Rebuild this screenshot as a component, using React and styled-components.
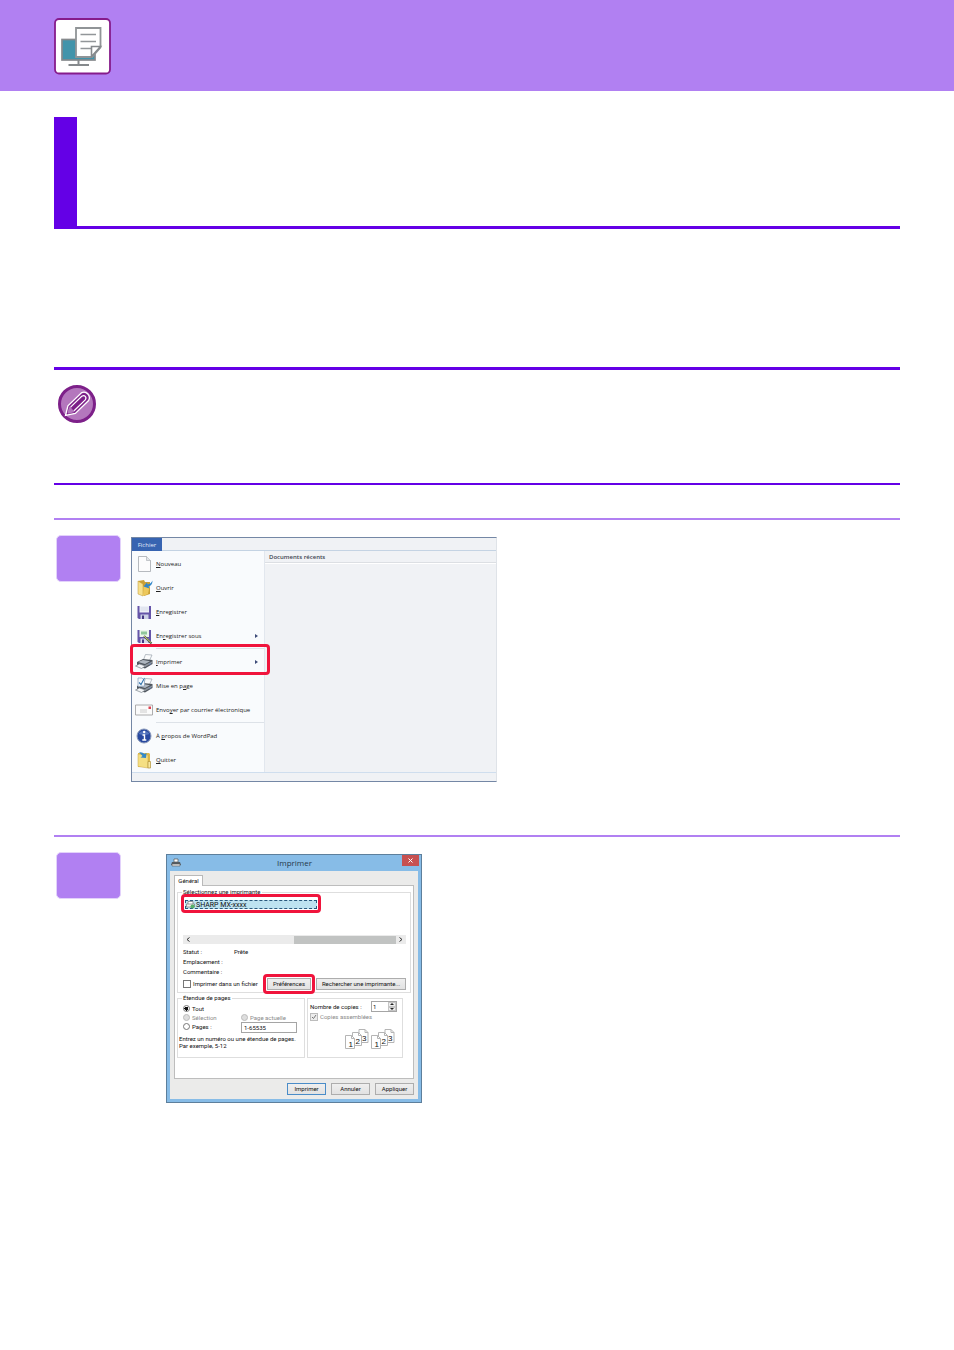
import React, {useState} from 'react';
import styled, {createGlobalStyle, css} from 'styled-components';


const GlobalStyle = createGlobalStyle`
    *, *::before, *::after {
        box-sizing: border-box;
    }
    body {
        margin: 0;
        background: #fff;
        font-family: "Open Sans", "Noto Sans", sans-serif;
        color: #222;
    }
    button, input {
        font: inherit;
        color: inherit;
        margin: 0;
        padding: 0;
        border: 0;
        border-radius: 0;
        background: none;
    }
    svg {
        display: block;
        flex: none;
    }
`

const Banner = styled.header`
    height: 91px;
    padding: 18px 54px;
    background: #b180f2;
`

const Main = styled.main`
    padding: 26px 54px 40px;
`

const TitleBlock = styled.div`
    height: 112px;
    border-left: 23px solid #6400e6;
    border-bottom: 3px solid #6400e6;
`

const Note = styled.section`
    height: 118px;
    margin-top: 138px;
    padding: 15px 4px;
    border-top: 3px solid #6400e6;
    border-bottom: 2px solid #6400e6;
`

const Step = styled.section`
    display: flex;
    align-items: flex-start;
    margin-top: ${props => props.$first ? '33px' : '53px'};
    padding: 15px 2px 0;
    border-top: 2px solid #b180f2;
`

const Badge = styled.div`
    width: 65px;
    height: 47px;
    flex: none;
    border: 1px solid #e3d2fb;
    border-radius: 5px;
    background: #b180f2;
`

const highlight = css`
    position: relative;

    &::after {
        content: '';
        position: absolute;
        border: 3px solid #f0143c;
        border-radius: 4px;
        pointer-events: none;
    }
`

/* File menu window */

const MenuWindow = styled.div`
    width: 366px;
    margin: 2px 0 0 10px;
    border: 1px solid #7487a5;
    border-right-color: #dfe3e8;
    background: #f0f2f5;
    font-size: 6px;
    line-height: 8px;
`

const MenuTabs = styled.div`
    display: flex;
    height: 13px;
    border-bottom: 1px solid #c4d3e3;
`

const MenuTab = styled.button`
    width: 30px;
    height: 13px;
    background: #3764b1;
    color: #e3edfb;
`

const MenuBody = styled.div`
    display: flex;
    height: 222px;
    border-bottom: 1px solid #cfdeee;
`

const MenuList = styled.nav`
    width: 133px;
    padding-top: 1px;
    border-right: 1px solid #e2e7ee;
    background: #f9fbfd;
`

const MenuItem = styled.button`
    display: flex;
    align-items: center;
    gap: 3px;
    width: 100%;
    height: 24px;
    padding: 0 6px 0 3px;
    text-align: left;
    white-space: nowrap;

    ${props => props.$marked && css`
        ${highlight}
        &::after {
            inset: -6px -6px -1px -2px;
        }
    `}
`

const ItemLabel = styled.span`
    flex: 1;
`

const Separator = styled.hr`
    height: 2px;
    margin: 0 0 0 24px;
    border: 0;
    border-top: 1px solid #dde2e8;
`

const Recent = styled.section`
    flex: 1;
`

const RecentTitle = styled.h3`
    height: 12px;
    margin: 0;
    padding: 2px 4px;
    border-bottom: 1px solid #dcdfe3;
    box-shadow: 0 1px #fff;
    font-size: 6px;
    font-weight: 600;
    line-height: 8px;
    color: #3b4350;
`

const MenuFoot = styled.div`
    height: 8px;
`

/* Print dialog */

const Dialog = styled.form`
    width: 256px;
    margin: 2px 0 0 45px;
    padding: 0 3px 3px;
    border: 1px solid #5d7f9c;
    background: #87bce7;
    font-family: Roboto, "Liberation Sans", sans-serif;
    font-size: 6px;
    line-height: 8px;
    color: #111;
    white-space: nowrap;
`

const DialogBar = styled.header`
    display: grid;
    grid-template-columns: 17px 1fr 17px;
    align-items: center;
    height: 16px;
    margin-right: -1px;
`

const DialogTitle = styled.h2`
    margin: 0;
    font-family: "Open Sans", "Noto Sans", sans-serif;
    font-size: 8px;
    font-weight: 400;
    line-height: 12px;
    text-align: center;
    color: #26394a;
`

const Close = styled.button`
    display: flex;
    align-items: center;
    justify-content: center;
    align-self: start;
    height: 11px;
    background: #c75050;
`

const DialogBody = styled.div`
    padding: 4px;
    background: #ebebea;
`

const Tab = styled.button`
    position: relative;
    display: block;
    width: 29px;
    height: 11px;
    margin-bottom: -1px;
    border: 1px solid #b9b9b9;
    border-bottom: 0;
    background: #fff;
`

const Pane = styled.div`
    padding: 2px 2px 20px;
    border: 1px solid #bdbdbd;
    background: #fff;
`

const Group = styled.fieldset`
    min-width: 0;
    margin: 0;
    padding: 0 4px 2px 5px;
    border: 1px solid #dedede;
`

const Legend = styled.legend`
    height: 8px;
    padding: 0 1px;
    margin-left: ${props => props.$indent || '-1px'};
`

const PrinterList = styled.div`
    height: 39px;
    padding: 4px 2px;
`

const Printer = styled.button`
    display: flex;
    align-items: center;
    gap: 1px;
    width: 132px;
    height: 9px;
    border: 1px dashed #28587c;
    background: #bde3f0;
    font-size: 7px;
    ${highlight}

    &::after {
        inset: -7px -5px -5px;
    }
`

const ScrollBar = styled.div`
    display: flex;
    align-items: center;
    height: 9px;
    background: #ebebeb;
`

const ScrollButton = styled.button`
    display: flex;
    align-items: center;
    justify-content: center;
    width: 10px;
    height: 9px;
`

const Thumb = styled.div`
    width: 102px;
    height: 8px;
    margin-left: auto;
    background: #c1c3c2;
`

const Status = styled.dl`
    display: grid;
    grid-template-columns: 51px 1fr;
    margin: 3px 0 1px;
    line-height: 10px;

    dt, dd {
        margin: 0;
    }
`

const Row = styled.div`
    display: flex;
    align-items: center;
    justify-content: space-between;
`

const Buttons = styled.div`
    display: flex;
    justify-content: flex-end;
    gap: 5px;
    margin-top: ${props => props.$top || '0'};
`

const Button = styled.button`
    width: ${props => props.$width || '39px'};
    height: 12px;
    border: 1px solid ${props => props.$primary ? '#4a8cc8' : '#adadad'};
    background: linear-gradient(#efefef, #e2e2e2);

    ${props => props.$marked && css`
        ${highlight}
        &::after {
            inset: -5px;
        }
    `}
`

const Field = styled.label`
    display: flex;
    align-items: center;
    gap: 2px;
    height: 9px;
    color: ${props => props.$muted ? '#8a8a8a' : 'inherit'};
`

const Tick = styled.input`
    appearance: none;
    width: 8px;
    height: 8px;
    flex: none;
    border: 1px solid #777;
    background: #fff;

    &:disabled {
        border-color: #bcbcbc;
        background: #ececec;
    }
    &:checked {
        background: url("data:image/svg+xml,%3Csvg xmlns='http://www.w3.org/2000/svg' viewBox='0 0 6 6'%3E%3Cpath d='M1 3l1.5 1.5L5 1' fill='none' stroke='%23777'/%3E%3C/svg%3E") #ececec;
    }
`

const Radio = styled.input`
    appearance: none;
    width: 7px;
    height: 7px;
    flex: none;
    border: 1px solid #777;
    border-radius: 50%;
    background: #fff;

    &:checked {
        background: radial-gradient(circle, #111 0 2px, #fff 2px);
    }
    &:disabled {
        border-color: #bcbcbc;
        background: #dedede;
    }
`

const Columns = styled.div`
    display: grid;
    grid-template-columns: 128px 96px;
    gap: 2px;
    margin-top: 1px;
`

const Range = styled(Group)`
    height: 64px;
    padding: 2px 0 0 1px;
`

const Choices = styled.div`
    display: grid;
    grid-template-columns: 58px 1fr;
    grid-auto-rows: 9px;
    padding-left: 4px;
`

const PageInput = styled.input`
    width: 56px;
    height: 11px;
    padding: 0 2px;
    border: 1px solid #a5a5a5;
    background: #fff;
`

const Hint = styled.p`
    margin: 4px 0 0;
    line-height: 7px;
`

const Copies = styled.section`
    display: flex;
    flex-direction: column;
    margin-top: 4px;
    padding: 2px 5px 0 2px;
    border: 1px solid #dedede;
`

const Spinner = styled.div`
    display: flex;
    width: 26px;
    height: 11px;
    border: 1px solid #a5a5a5;

    input {
        appearance: textfield;
        width: 16px;
        padding-left: 1px;
    }
    input::-webkit-inner-spin-button {
        appearance: none;
    }
`

const SpinButtons = styled.div`
    display: flex;
    flex-direction: column;
    width: 8px;

    button {
        display: flex;
        align-items: center;
        justify-content: center;
        flex: 1;
        border: 1px solid #c5c5c5;
        background: #efefef;
    }
`

const Sheets = styled.div`
    display: flex;
    align-self: flex-end;
    gap: 2px;
    margin: 8px 2px 0 0;
`


const AppLogo = () => (
    <svg width="57" height="57" viewBox="0 0 57 57">
        <rect x="1" y="1" width="55" height="54.500" rx="4" fill="#fff" stroke="#861b8b" strokeWidth="1.800" />
        <rect x="8" y="21.500" width="33" height="20.500" fill="#4294ab" stroke="#85898c" strokeWidth="1.700" />
        <path d="M24.500 42v5M14.500 47h20.500" stroke="#85898c" strokeWidth="2" />
        <path d="M22 10h24.500v19.500l-8.500 9.500H22z" fill="#fff" stroke="#909497" strokeWidth="1.800" />
        <path d="M26.500 16.500H42M26.500 23.500H42M26.500 30.500H37" stroke="#929699" strokeWidth="1.700" />
        <path d="M37.500 38.500v-10H46.500z" fill="#fff" stroke="#85898c" strokeWidth="1.600" />
    </svg>
)

const Pencil = () => (
    <svg width="38" height="38" viewBox="0 0 38 38">
        <circle cx="19" cy="19" r="17.500" fill="#b477bd" stroke="#7d2089" strokeWidth="3" />
        <g transform="translate(7.500 30.500) rotate(-44)">
            <path d="M0 0L8.500-5.300H27q4 1.300 4 5.300t-4 5.300H8.500z" fill="#7d2089" stroke="#fff" strokeWidth="1.300" />
            <path d="M3.500-.8L9-3.800q1.500 1.800 0 3.800 1.500 2 0 3.800L3.500.8z" fill="#b477bd" />
            <path d="M9.500-2.500H25q2.500.5 2.500 2.500T25 2.500H9.500" fill="none" stroke="#fff" strokeWidth="1.200" />
            <path d="M11 0h14" stroke="#7d2089" strokeWidth="2" />
        </g>
    </svg>
)

const printerShape = (
    <>
        <path d="M8 8L10.500 1.500 17 2l-3 6.500z" fill="#fafbfc" stroke="#9aa3ad" strokeWidth=".7" />
        <path d="M2 9l6-3 9.500 1v4L10 15.500 2 13z" fill="#4f565e" />
        <path d="M3 9l5-2 7 1.300-5 2.700z" fill="#aeb6bf" />
        <path d="M10 12l7-3.500v1.500l-7 4z" fill="#8b939c" />
        <path d="M.5 13l4-2 6 2-4 2.500z" fill="#f2f4f6" stroke="#7b848d" strokeWidth=".7" />
        <circle cx="15" cy="11" r=".7" fill="#6c8fd0" />
    </>
)

const icons = {
    blank: (
        <>
            <path d="M3.500 1.500h8l4 4v11h-12z" fill="#fcfcfd" stroke="#a4a9ae" strokeWidth=".8" />
            <path d="M11.500 1.500v4h4" fill="#e2e5e8" stroke="#a4a9ae" strokeWidth=".6" />
        </>
    ),
    open: (
        <>
            <path d="M3 2l6-1 1 2 5 0v12l-6 2z" fill="#c99f35" />
            <path d="M3 2l5 3v12l-5-2z" fill="#f7e08c" stroke="#bd9531" strokeWidth=".5" />
            <path d="M8.500 7L15 5.500 13 15l-5 2z" fill="#edc85c" />
            <path d="M17.500 1.500q0 5-4 6l1 2-6-2 3.500-4 .5 2q3.500-.5 5-4z" fill="#2f86c9" />
        </>
    ),
    save: (
        <>
            <path d="M2.500 3H16v13H4l-1.500-1z" fill="#6555a9" />
            <path d="M4.500 3H14v6.500H4.500z" fill="#eef1f8" />
            <path d="M5.500 5h8M5.500 7h8" stroke="#c8cedd" strokeWidth=".6" />
            <path d="M5.500 11.500h8V16h-8z" fill="#ccd0e6" />
            <path d="M7 12.500h2V16H7z" fill="#433783" />
        </>
    ),
    saveAs: (
        <>
            <path d="M2.500 3H16v13H4l-1.500-1z" fill="#6555a9" />
            <path d="M4.500 3H14v7H4.500z" fill="#eaf5ea" />
            <path d="M6 4.500h6v3H6z" fill="#8fc69a" />
            <path d="M5.500 11.500h8V16h-8z" fill="#d5d8eb" />
            <path d="M7 12.500h2V16H7z" fill="#433783" />
            <path d="M9 9l7.500 7.500" stroke="#4f584d" strokeWidth="2" />
            <path d="M9 9l7 6.500" stroke="#d7e077" strokeWidth=".9" />
        </>
    ),
    print: printerShape,
    setup: (
        <>
            {printerShape}
            <path d="M3 1h4l2.500 2.500V9L3 9.500z" fill="#f4f8fd" stroke="#829bb8" strokeWidth=".7" />
            <path d="M4 5.500l2 2L9.500 1" fill="none" stroke="#3777ad" strokeWidth="1.100" />
        </>
    ),
    mail: (
        <>
            <path d="M.5 4h17v10H.5z" fill="#fbfbfb" stroke="#9a9a9a" strokeWidth=".8" />
            <path d="M5 9h7M5 11h7" stroke="#c2c2c2" strokeWidth=".8" />
            <path d="M13.500 5.500h2.500v2.500h-2.500z" fill="#dc4250" />
        </>
    ),
    about: (
        <>
            <circle cx="9" cy="9" r="7" fill="#2849a0" stroke="#8a99b9" />
            <path d="M3.500 7a6 5 0 0 1 11 0q-5 2-11 0z" fill="#5374bd" />
            <path d="M7.500 8H9.500v5M7.300 13h4" fill="none" stroke="#fff" strokeWidth="1.400" />
            <circle cx="9.200" cy="5" r="1.200" fill="#fff" />
        </>
    ),
    quit: (
        <>
            <path d="M3 2h11l1 1v13H3z" fill="#dfbb4b" />
            <path d="M3 3l10 1v13l-10-1.500z" fill="#f5df83" stroke="#caa547" strokeWidth=".5" />
            <path d="M13 10.500h2.500V17H13z" fill="#f9e89f" stroke="#b1923a" strokeWidth=".7" />
            <path d="M4 1.500q3-1 5.500 1.500l2-1L11 7 5.500 6.500l2-1.500Q6 3 4 1.500z" fill="#3589c8" />
        </>
    ),
}

const menu = [
    {icon: 'blank', before: '', key: 'N', after: 'ouveau'},
    {icon: 'open', before: '', key: 'O', after: 'uvrir'},
    {icon: 'save', before: '', key: 'E', after: 'nregistrer'},
    {icon: 'saveAs', before: 'En', key: 'r', after: 'egistrer sous', sub: true, line: true},
    {icon: 'print', before: '', key: 'I', after: 'mprimer', sub: true, marked: true},
    {icon: 'setup', before: 'Mise en p', key: 'a', after: 'ge'},
    {icon: 'mail', before: 'Envo', key: 'y', after: 'er par courrier électronique', line: true},
    {icon: 'about', before: 'À ', key: 'p', after: 'ropos de WordPad'},
    {icon: 'quit', before: '', key: 'Q', after: 'uitter'},
]

const FileMenu = () => (
    <MenuWindow>
        <MenuTabs><MenuTab type="button">Fichier</MenuTab></MenuTabs>
        <MenuBody>
            <MenuList>
                {menu.map(item => (
                    <React.Fragment key={item.icon}>
                        <MenuItem type="button" $marked={item.marked}>
                            <svg width="18" height="18" viewBox="0 0 18 18">{icons[item.icon]}</svg>
                            <ItemLabel>{item.before}<u>{item.key}</u>{item.after}</ItemLabel>
                            {item.sub && <svg width="3" height="4" viewBox="0 0 3 4"><path d="M0 0l3 2-3 2z" fill="#3c4b78" /></svg>}
                        </MenuItem>
                        {item.line && <Separator />}
                    </React.Fragment>
                ))}
            </MenuList>
            <Recent>
                <RecentTitle>Documents récents</RecentTitle>
            </Recent>
        </MenuBody>
        <MenuFoot />
    </MenuWindow>
)

const Collated = () => (
    <svg width="24" height="21" viewBox="0 0 24 21" fontSize="8" fontFamily="Liberation Sans">
        {[[14, .5, 3], [7.5, 3.5, 2], [.5, 6.5, 1]].map(([x, y, n]) => (
            <g key={n}>
                <path d={`M${x} ${y}h6l3 3v10h-9z`} fill="#fff" stroke="#b5b5b5" />
                <path d={`M${x + 6} ${y}v3h3`} fill="none" stroke="#b5b5b5" />
                <text x={x + 3} y={y + 11} fill="#111">{n}</text>
            </g>
        ))}
    </svg>
)

const PrintDialog = () => {
    const [range, setRange] = useState('all');
    const [pages, setPages] = useState('1-65535');
    const [copies, setCopies] = useState(1);
    const [toFile, setToFile] = useState(false);

    return (
        <Dialog onSubmit={e => e.preventDefault()}>
            <DialogBar>
                <svg width="12" height="10" viewBox="0 0 12 10">
                    <path d="M4 1h4v3H4z" fill="#fff" stroke="#555" strokeWidth=".7" />
                    <path d="M2 4h8l1 3H1z" fill="#555c62" />
                    <path d="M2 6h8v2H2z" fill="#e5e5e5" stroke="#555" strokeWidth=".6" />
                </svg>
                <DialogTitle>Imprimer</DialogTitle>
                <Close type="button" aria-label="Fermer">
                    <svg width="5" height="5" viewBox="0 0 5 5"><path d="M.5.5l4 4M4.500.5l-4 4" stroke="#fff" /></svg>
                </Close>
            </DialogBar>
            <DialogBody>
                <Tab type="button">Général</Tab>
                <Pane>
                    <Group>
                        <Legend>Sélectionnez une imprimante</Legend>
                        <PrinterList>
                            <Printer type="button">
                                <svg width="9" height="8" viewBox="0 0 9 8">
                                    <path d="M2 .5h5v3H2z" fill="#fff" stroke="#777" strokeWidth=".7" />
                                    <path d="M.5 3h8v3h-8z" fill="#eee" stroke="#777" strokeWidth=".7" />
                                    <circle cx="6.500" cy="5.500" r="2" fill="#55b268" />
                                </svg>
                                SHARP MX-xxxx
                            </Printer>
                        </PrinterList>
                        <ScrollBar>
                            <ScrollButton type="button" aria-label="Gauche">
                                <svg width="4" height="5" viewBox="0 0 4 5"><path d="M3.500.5l-2.500 2 2.500 2" fill="none" stroke="#333" /></svg>
                            </ScrollButton>
                            <Thumb />
                            <ScrollButton type="button" aria-label="Droite">
                                <svg width="4" height="5" viewBox="0 0 4 5"><path d="M.5.5l2.500 2-2.500 2" fill="none" stroke="#333" /></svg>
                            </ScrollButton>
                        </ScrollBar>
                        <Status>
                            <dt>Statut :</dt><dd>Prête</dd>
                            <dt>Emplacement :</dt><dd />
                            <dt>Commentaire :</dt><dd />
                        </Status>
                        <Row>
                            <Field>
                                <Tick type="checkbox" checked={toFile} onChange={() => setToFile(!toFile)} />
                                Imprimer dans un fichier
                            </Field>
                            <Buttons>
                                <Button type="button" $width="44px" $marked>Préférences</Button>
                                <Button type="button" $width="90px">Rechercher une imprimante...</Button>
                            </Buttons>
                        </Row>
                    </Group>
                    <Columns>
                        <Range>
                            <Legend $indent="3px">Étendue de pages</Legend>
                            <Choices>
                                <Field><Radio type="radio" name="range" checked={range === 'all'} onChange={() => setRange('all')} />Tout</Field>
                                <span />
                                <Field $muted><Radio type="radio" name="range" disabled />Sélection</Field>
                                <Field $muted><Radio type="radio" name="range" disabled />Page actuelle</Field>
                                <Field><Radio type="radio" name="range" checked={range === 'pages'} onChange={() => setRange('pages')} />Pages :</Field>
                                <PageInput aria-label="Pages" value={pages} onChange={e => setPages(e.target.value)} />
                            </Choices>
                            <Hint>Entrez un numéro ou une étendue de pages.<br />Par exemple, 5-12</Hint>
                        </Range>
                        <Copies>
                            <Row>
                                <label htmlFor="copies">Nombre de copies :</label>
                                <Spinner>
                                    <input id="copies" type="number" min="1" value={copies} onChange={e => setCopies(Number(e.target.value))} />
                                    <SpinButtons>
                                        <button type="button" aria-label="Plus" onClick={() => setCopies(copies + 1)}>
                                            <svg width="4" height="2" viewBox="0 0 4 2"><path d="M0 2l2-2 2 2z" fill="#222" /></svg>
                                        </button>
                                        <button type="button" aria-label="Moins" onClick={() => setCopies(Math.max(1, copies - 1))}>
                                            <svg width="4" height="2" viewBox="0 0 4 2"><path d="M0 0l2 2 2-2z" fill="#222" /></svg>
                                        </button>
                                    </SpinButtons>
                                </Spinner>
                            </Row>
                            <Field $muted><Tick type="checkbox" checked disabled readOnly />Copies assemblées</Field>
                            <Sheets><Collated /><Collated /></Sheets>
                        </Copies>
                    </Columns>
                </Pane>
                <Buttons $top="4px">
                    <Button type="submit" $primary>Imprimer</Button>
                    <Button type="button">Annuler</Button>
                    <Button type="button">Appliquer</Button>
                </Buttons>
            </DialogBody>
        </Dialog>
    )
}

const App = () => (
    <>
        <GlobalStyle />
        <Banner><AppLogo /></Banner>
        <Main>
            <TitleBlock />
            <Note><Pencil /></Note>
            <Step $first>
                <Badge />
                <FileMenu />
            </Step>
            <Step>
                <Badge />
                <PrintDialog />
            </Step>
        </Main>
    </>
)

export default App;
